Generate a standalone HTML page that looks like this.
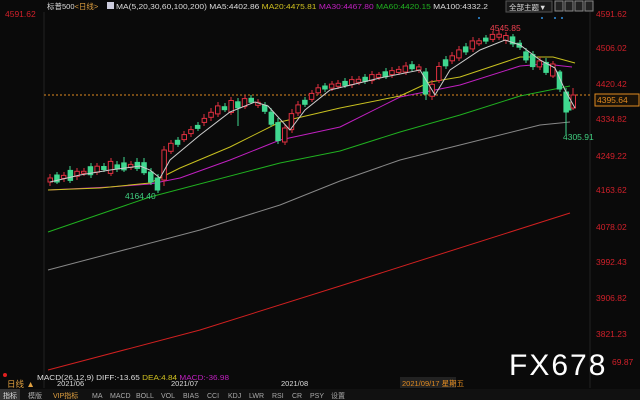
<!DOCTYPE html><html><head><meta charset="utf-8"><style>
body{margin:0;background:#0a0a0a;width:640px;height:400px;overflow:hidden;font-family:"Liberation Sans","Noto Sans CJK SC",sans-serif}
svg{position:absolute;left:0;top:0}
.u{fill:#0a0a0a;stroke:#e03040;stroke-width:1}
.d{fill:#40d890;stroke:#40d890;stroke-width:1}
</style></head><body>
<svg width="640" height="400" xmlns="http://www.w3.org/2000/svg" font-family="Liberation Sans, Noto Sans CJK SC, sans-serif">
<rect width="640" height="400" fill="#0a0a0a"/>
<line x1="44" y1="12" x2="44" y2="388" stroke="#222" />
<line x1="590" y1="12" x2="590" y2="388" stroke="#222"/>
<g font-size="8.5" fill="#d0202a">
<text x="5" y="17">4591.62</text>
<text x="596" y="17">4591.62</text><text x="596" y="51">4506.02</text><text x="596" y="87">4420.42</text><text x="596" y="122">4334.82</text><text x="596" y="159">4249.22</text><text x="596" y="193">4163.62</text><text x="596" y="230">4078.02</text><text x="596" y="265">3992.43</text><text x="596" y="301">3906.82</text><text x="596" y="337">3821.23</text><text x="612" y="365">69.87</text>
</g>
<line x1="44" y1="95" x2="590" y2="95" stroke="#e08a20" stroke-dasharray="2,2"/>
<rect x="595" y="94" width="44" height="12" fill="#1a1208" stroke="#e08a20"/>
<text x="597" y="103" font-size="8.5" fill="#e08a20">4395.64</text>
<g fill="none" stroke-width="1" stroke-linejoin="round">
<polyline points="48,370 200,330 340,286 570,213" stroke="#d02020"/>
<polyline points="48,270 200,230 280,205 340,181 400,160 460,145 540,125 570,122" stroke="#888"/>
<polyline points="48,232 150,197 280,163 340,151 400,132 460,115 520,96 570,86" stroke="#20b020"/>
<polyline points="48,190 110,187 150,184 180,178 230,160 280,140 340,127 400,97 460,85 520,66 545,64 572,67" stroke="#c020c0"/>
<polyline points="48,190 100,188 150,183 180,168 230,147 280,122 340,108 400,96 430,82 460,77 520,57 553,57 575,63" stroke="#c8c020"/>
</g>
<path fill="none" stroke="#e03040" d="M50,174V186M64,172V182M77,168V180M84,168V176M97,163V175M111,158V176M131,161V170M164,146V186M171,140V154M184,131V142M191,126V137M204,114V126M211,108V121M218,102V117M231,97V115M245,95V109M258,99V108M285,124V145M292,109V133M298,101V116M312,90V102M318,84V95M332,81V91M338,80V89M352,76V88M359,76V85M372,71V84M379,72V80M392,67V78M399,66V75M406,62V75M419,64V73M432,80V100M439,62V83M452,52V64M459,46V61M473,37V52M479,38V46M493,31V42M499,30V40M506,32V44M540,57V70M553,61V78M573,88V110"/>
<path fill="none" stroke="#40d890" d="M57,172V184M70,166V183M91,163V178M104,163V172M117,161V172M124,157V172M137,158V171M144,158V175M151,168V185M158,174V193M178,137V147M198,122V131M225,103V112M238,98V126M251,95V104M265,102V114M271,108V127M278,118V144M305,97V107M325,83V92M345,78V88M365,74V84M386,68V79M412,61V71M426,68V100M446,56V69M466,43V55M486,35V44M513,34V47M520,40V50M526,48V63M533,51V70M546,58V75M560,70V92M566,88V134"/>
<g>
<rect class="u" x="48" y="178" width="4.5" height="4"/><rect class="d" x="54.7" y="175" width="4.5" height="7"/><rect class="u" x="61.4" y="175.4" width="4.5" height="3"/><rect class="d" x="68.1" y="170.4" width="4.5" height="10"/><rect class="u" x="74.8" y="171.3" width="4.5" height="5"/><rect class="u" x="81.5" y="171.3" width="4.5" height="2"/><rect class="d" x="88.2" y="166.7" width="4.5" height="8"/><rect class="u" x="94.9" y="166.2" width="4.5" height="6"/><rect class="d" x="101.6" y="166.5" width="4.5" height="3"/><rect class="u" x="108.3" y="161.4" width="4.5" height="12"/>
<rect class="d" x="115" y="164.9" width="4.5" height="4"/><rect class="d" x="121.7" y="162.9" width="4.5" height="7"/><rect class="u" x="128.4" y="164.4" width="4.5" height="3"/><rect class="d" x="135.1" y="162.4" width="4.5" height="6"/><rect class="d" x="141.8" y="162.7" width="4.5" height="10"/><rect class="d" x="148.5" y="172" width="4.5" height="10"/><rect class="d" x="155.2" y="178" width="4.5" height="12"/><rect class="u" x="161.9" y="150" width="4.5" height="30"/><rect class="u" x="168.6" y="143.3" width="4.5" height="8"/><rect class="d" x="175.3" y="140.3" width="4.5" height="4"/>
<rect class="u" x="182" y="134.6" width="4.5" height="5"/><rect class="u" x="188.7" y="129.6" width="4.5" height="4"/><rect class="d" x="195.4" y="125.4" width="4.5" height="3"/><rect class="u" x="202.1" y="118.4" width="4.5" height="4"/><rect class="u" x="208.8" y="112.3" width="4.5" height="5"/><rect class="u" x="215.5" y="105.9" width="4.5" height="8"/><rect class="d" x="222.2" y="106.7" width="4.5" height="3"/><rect class="u" x="228.9" y="100.5" width="4.5" height="12"/><rect class="d" x="235.6" y="101.8" width="4.5" height="6"/><rect class="u" x="242.3" y="98.6" width="4.5" height="8"/>
<rect class="d" x="249" y="98.3" width="4.5" height="4"/><rect class="u" x="255.7" y="102.3" width="4.5" height="3"/><rect class="d" x="262.4" y="105.3" width="4.5" height="6"/><rect class="d" x="269.1" y="112.2" width="4.5" height="12"/><rect class="d" x="275.8" y="122.6" width="4.5" height="18"/><rect class="u" x="282.5" y="128" width="4.5" height="14"/><rect class="u" x="289.2" y="113.6" width="4.5" height="16"/><rect class="u" x="295.9" y="104.9" width="4.5" height="8"/><rect class="d" x="302.6" y="100.3" width="4.5" height="4"/><rect class="u" x="309.3" y="93.4" width="4.5" height="6"/>
<rect class="u" x="316" y="87.8" width="4.5" height="5"/><rect class="d" x="322.7" y="86" width="4.5" height="3"/><rect class="u" x="329.4" y="84.1" width="4.5" height="4"/><rect class="u" x="336.1" y="83.3" width="4.5" height="3"/><rect class="d" x="342.8" y="81.4" width="4.5" height="4"/><rect class="u" x="349.5" y="79.6" width="4.5" height="5"/><rect class="u" x="356.2" y="79.3" width="4.5" height="3"/><rect class="d" x="362.9" y="77.3" width="4.5" height="4"/><rect class="u" x="369.6" y="74.6" width="4.5" height="6"/><rect class="u" x="376.3" y="74.4" width="4.5" height="3"/>
<rect class="d" x="383" y="71.8" width="4.5" height="5"/><rect class="u" x="389.7" y="70.6" width="4.5" height="4"/><rect class="u" x="396.4" y="69.4" width="4.5" height="3"/><rect class="u" x="403.1" y="66" width="4.5" height="6"/><rect class="d" x="409.8" y="64.7" width="4.5" height="4"/><rect class="u" x="416.5" y="66.9" width="4.5" height="3"/><rect class="d" x="423.2" y="72" width="4.5" height="22"/><rect class="u" x="429.9" y="84.3" width="4.5" height="12"/><rect class="u" x="436.6" y="66.5" width="4.5" height="14"/><rect class="d" x="443.3" y="59.8" width="4.5" height="6"/>
<rect class="u" x="450" y="55.8" width="4.5" height="5"/><rect class="u" x="456.7" y="49.9" width="4.5" height="8"/><rect class="d" x="463.4" y="46.9" width="4.5" height="5"/><rect class="u" x="470.1" y="40.9" width="4.5" height="8"/><rect class="u" x="476.8" y="40.8" width="4.5" height="3"/><rect class="d" x="483.5" y="38.1" width="4.5" height="3"/><rect class="u" x="490.2" y="34.4" width="4.5" height="5"/><rect class="u" x="496.9" y="34.2" width="4.5" height="3"/><rect class="u" x="503.6" y="35.5" width="4.5" height="5"/><rect class="d" x="510.3" y="36.9" width="4.5" height="7"/>
<rect class="d" x="517" y="43.2" width="4.5" height="4"/><rect class="d" x="523.7" y="51.9" width="4.5" height="8"/><rect class="d" x="530.4" y="54.6" width="4.5" height="12"/><rect class="u" x="537.1" y="60.9" width="4.5" height="6"/><rect class="d" x="543.8" y="62.4" width="4.5" height="10"/><rect class="u" x="550.5" y="64" width="4.5" height="12"/><rect class="d" x="557.2" y="72" width="4.5" height="17"/><rect class="d" x="563.9" y="92" width="4.5" height="20"/><rect class="d" x="567" y="102" width="4" height="8"/><rect class="u" x="571" y="95" width="4.5" height="13"/>
</g>
<path fill="none" stroke="#ccc" d="M50,182 L80,175 L110,170 L140,166 L150,170 L160,178 L170,160 L200,135 L230,112 L255,102 L268,106 L290,130 L305,110 L330,90 L380,78 L420,70 L435,95 L450,70 L480,50 L505,40 L520,45 L540,60 L555,68 L565,90 L575,108"/>
<text x="490" y="31" font-size="8.5" fill="#f04050">4545.85</text>
<text x="563" y="140" font-size="8.5" fill="#40d080">4305.91</text>
<text x="125" y="199" font-size="8.5" fill="#40d080">4164.40</text>
<g fill="#3090e0"><circle cx="479" cy="18" r="1"/><circle cx="542" cy="18" r="1"/><circle cx="555" cy="18" r="1"/><circle cx="562" cy="18" r="1"/></g>
<g font-size="7.5" fill="#ddd">
<text x="47" y="9">标普500<tspan fill="#e0a040">&lt;日线&gt;</tspan></text>
<rect x="107" y="2" width="7" height="7" fill="#ccd" />
<text x="116" y="9" textLength="372" lengthAdjust="spacingAndGlyphs">MA(5,20,30,60,100,200) MA5:4402.86 <tspan fill="#d0c020">MA20:4475.81</tspan> <tspan fill="#c020c0">MA30:4467.80</tspan> <tspan fill="#20b020">MA60:4420.15</tspan> MA100:4332.2</text>
</g>
<rect x="506" y="1" width="46" height="11" fill="#1a1a1a" stroke="#555"/><text x="509" y="10" font-size="7.5" fill="#ddd">全部主题▼</text>
<g fill="#222" stroke="#888"><rect x="555" y="1" width="8" height="10"/><rect x="565" y="1" width="8" height="10"/><rect x="575" y="1" width="8" height="10"/><rect x="585" y="1" width="8" height="10"/></g>
<g font-size="7.5" fill="#ddd">
<text x="37" y="380" textLength="192" lengthAdjust="spacingAndGlyphs">MACD(26,12,9) DIFF:-13.65 <tspan fill="#d0c020">DEA:4.84</tspan> <tspan fill="#c020c0">MACD:-36.98</tspan></text>
<text x="57" y="386">2021/06</text><text x="171" y="386">2021/07</text><text x="281" y="386">2021/08</text>
</g>
<rect x="400" y="377" width="56" height="11" fill="#222"/><text x="402" y="386" font-size="7.5" fill="#e08a20">2021/09/17 星期五</text>
<text x="7" y="387" font-size="8.5" fill="#e0a040">日线 ▲</text>
<circle cx="5" cy="375" r="2" fill="#e02020"/>
<text x="509" y="375" font-size="30" fill="#fff" letter-spacing="2">FX678</text>
<rect x="0" y="389" width="640" height="11" fill="#111"/>
<rect x="0" y="389" width="20" height="11" fill="#333"/>
<g font-size="7" fill="#aaa">
<text x="3" y="398" fill="#ddd">指标</text><text x="28" y="398">模版</text><text x="53" y="398" fill="#e0a040">VIP指标</text><text x="92" y="398">MA</text><text x="110" y="398">MACD</text><text x="136" y="398">BOLL</text><text x="161" y="398">VOL</text><text x="183" y="398">BIAS</text><text x="207" y="398">CCI</text><text x="228" y="398">KDJ</text><text x="249" y="398">LWR</text><text x="272" y="398">RSI</text><text x="292" y="398">CR</text><text x="310" y="398">PSY</text><text x="331" y="398">设置</text></g>
</svg>
</body></html>
